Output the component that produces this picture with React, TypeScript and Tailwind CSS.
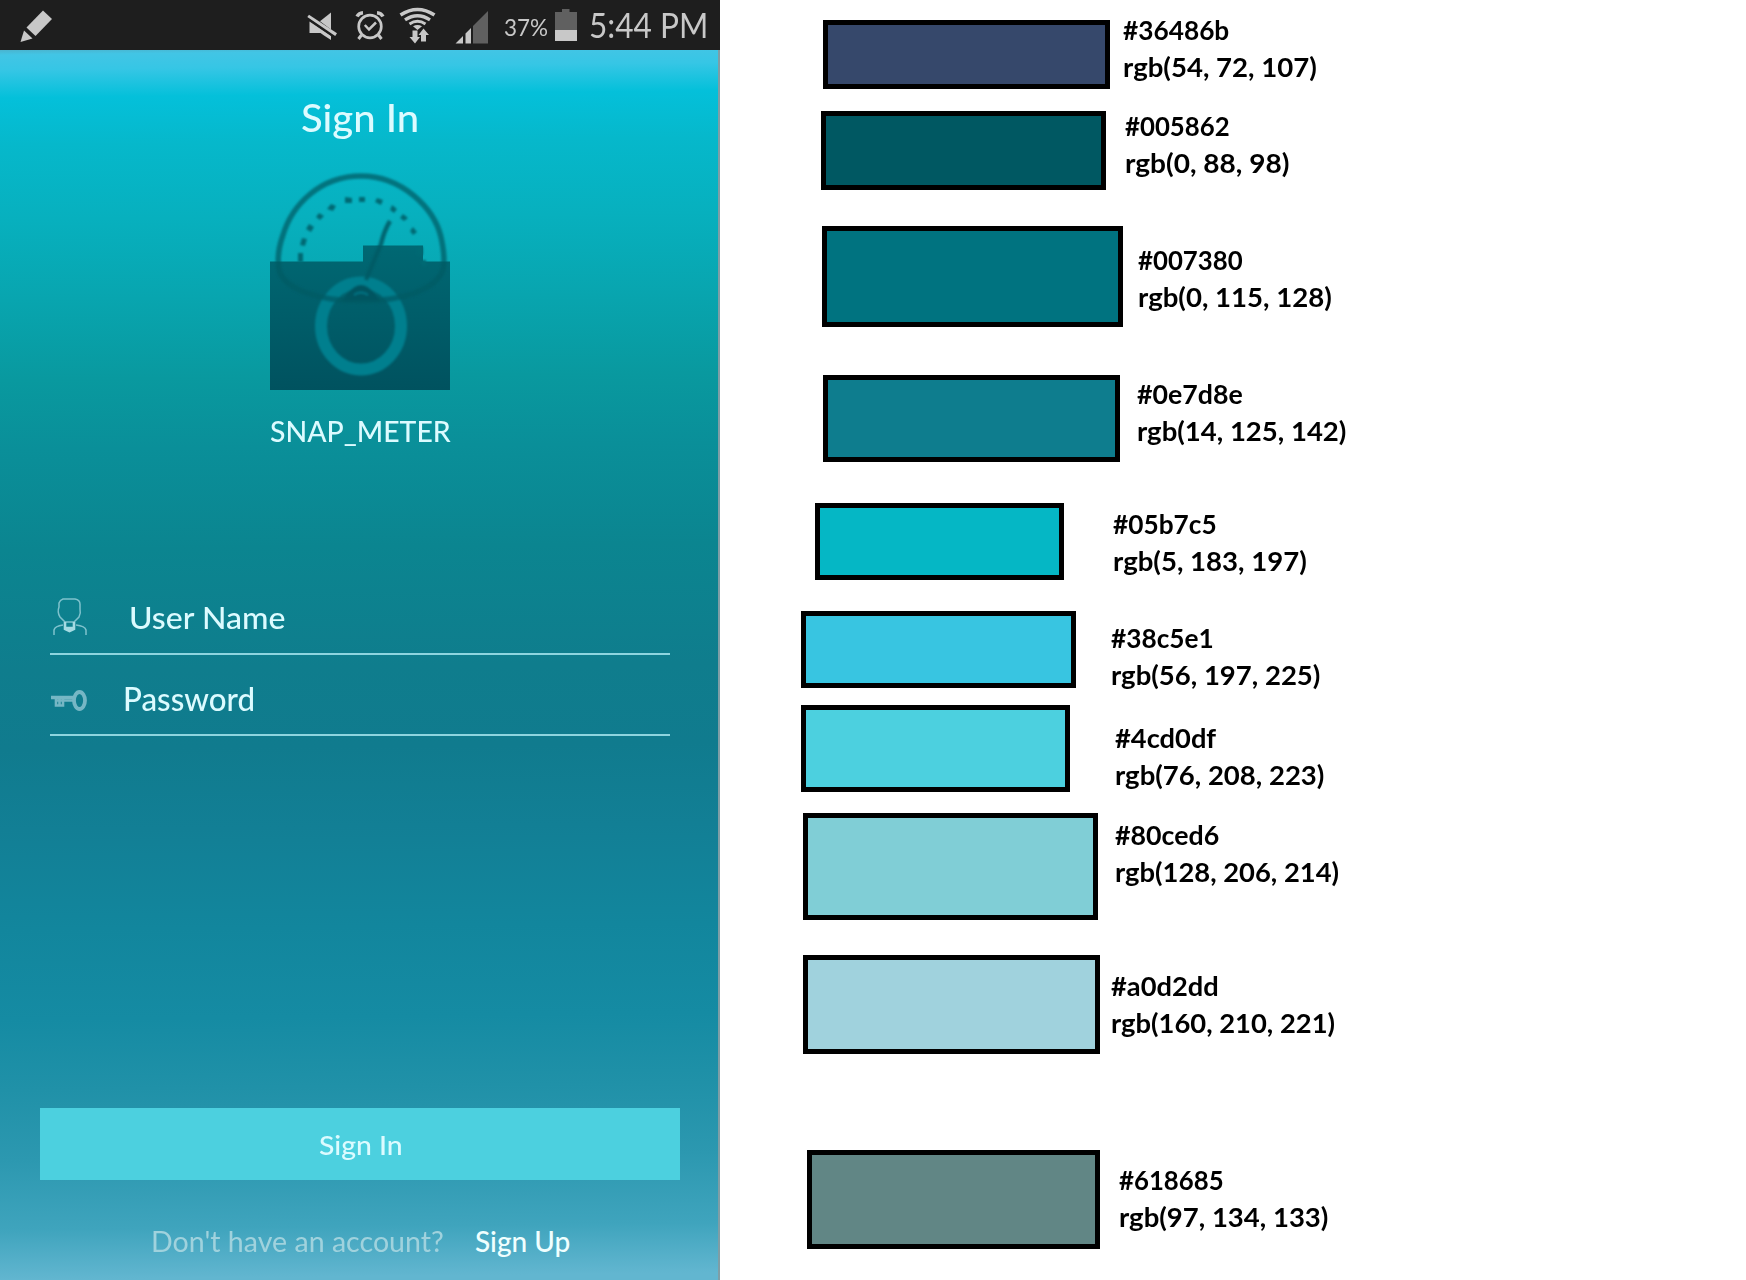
import { useLayoutEffect, useRef, useState } from "react";

/** Text that is stretched or squeezed horizontally to fill a given width. */
function FitText({ text, width, className = "" }: { text: string; width: number; className?: string }) {
  const ref = useRef<HTMLSpanElement>(null);
  const [scale, setScale] = useState(1);
  useLayoutEffect(() => {
    if (ref.current) setScale(width / ref.current.offsetWidth);
  }, [text, width]);
  return (
    <span className={`block ${className}`} style={{ width }}>
      <span ref={ref} className="inline-block origin-left whitespace-nowrap" style={{ transform: `scaleX(${scale})` }}>
        {text}
      </span>
    </span>
  );
}

const swatches = [
  { hex: "#36486b", rgb: "rgb(54, 72, 107)", hw: 106, rw: 194, row: "pl-[103px] mt-[20px]", box: "w-[287px] h-[69px] bg-[#36486b]", label: "ml-[13px] -mt-[9px]" },
  { hex: "#005862", rgb: "rgb(0, 88, 98)", hw: 105, rw: 164, row: "pl-[101px] mt-[22px]", box: "w-[285px] h-[79px] bg-[#005862]", label: "ml-[19px] -mt-[4px]" },
  { hex: "#007380", rgb: "rgb(0, 115, 128)", hw: 105, rw: 194, row: "pl-[102px] mt-[36px]", box: "w-[301px] h-[101px] bg-[#007380]", label: "ml-[15px] mt-[15px]" },
  { hex: "#0e7d8e", rgb: "rgb(14, 125, 142)", hw: 106, rw: 209, row: "pl-[103px] mt-[48px]", box: "w-[297px] h-[87px] bg-[#0e7d8e]", label: "ml-[17px] mt-0" },
  { hex: "#05b7c5", rgb: "rgb(5, 183, 197)", hw: 104, rw: 194, row: "pl-[95px] mt-[41px]", box: "w-[249px] h-[77px] bg-[#05b7c5]", label: "ml-[49px] mt-[2px]" },
  { hex: "#38c5e1", rgb: "rgb(56, 197, 225)", hw: 103, rw: 209, row: "pl-[81px] mt-[31px]", box: "w-[275px] h-[77px] bg-[#38c5e1]", label: "ml-[35px] mt-[8px]" },
  { hex: "#4cd0df", rgb: "rgb(76, 208, 223)", hw: 101, rw: 209, row: "pl-[81px] mt-[17px]", box: "w-[269px] h-[87px] bg-[#4cd0df]", label: "ml-[45px] mt-[14px]" },
  { hex: "#80ced6", rgb: "rgb(128, 206, 214)", hw: 104, rw: 224, row: "pl-[83px] mt-[21px]", box: "w-[295px] h-[107px] bg-[#80ced6]", label: "ml-[17px] mt-[3px]" },
  { hex: "#a0d2dd", rgb: "rgb(160, 210, 221)", hw: 108, rw: 224, row: "pl-[83px] mt-[35px]", box: "w-[297px] h-[99px] bg-[#a0d2dd]", label: "ml-[11px] mt-[12px]" },
  { hex: "#618685", rgb: "rgb(97, 134, 133)", hw: 105, rw: 209, row: "pl-[87px] mt-[96px]", box: "w-[293px] h-[99px] bg-[#618685]", label: "ml-[19px] mt-[11px]" },
];

function Palette() {
  return (
    <section className="flex h-[1280px] flex-1 flex-col bg-white font-['Lato',sans-serif] text-[27px] leading-[37px] font-bold text-black">
      {swatches.map((s) => (
        <div key={s.hex} className={`flex items-start ${s.row}`}>
          <div className={`shrink-0 border-5 border-black ${s.box}`} />
          <div className={`h-0 ${s.label}`}>
            <FitText text={s.hex} width={s.hw} />
            <FitText text={s.rgb} width={s.rw} />
          </div>
        </div>
      ))}
    </section>
  );
}

function StatusBar() {
  return (
    <header className="flex h-[50px] bg-[#1e1e1e] text-[#c8c8c8]">
      <svg width="60" height="50" viewBox="0 0 60 50" fill="#c8c8c8">
        <path d="M43 10.5 52 19 35.5 36 26.5 27.500Z" />
        <path d="M24 30.500 32.500 38.500 20.500 42Z" />
      </svg>
      <svg className="ml-[240px]" width="200" height="50" viewBox="300 0 200 50" fill="none" stroke="#c8c8c8">
        <g fill="#c8c8c8" stroke="none">
          <path d="M309.500 21.500 331 36V40L324 35.500 320.500 33H309.500Z" />
          <path d="M331 12.500V29.500L320 21.300Z" />
          <path d="M309 14.700 337 33.200 335.200 36 307.300 17Z" />
        </g>
        <path d="M308 19 334 37" stroke="#1e1e1e" strokeWidth="1.500" />
        <circle cx="370" cy="26.500" r="11.300" strokeWidth="2.700" />
        <path d="M364.800 25 369 29.500 376 22.500" strokeWidth="2.500" />
        <path d="M357 16.500Q359 13 363 12.700M383 16.500Q381 13 377 12.700" strokeWidth="3.500" />
        <path d="M361.500 35 358.500 39M378.500 35 381.500 39" strokeWidth="3" />
        <path d="M400.500 15Q417.500 4 434.500 15" strokeWidth="3.600" />
        <path d="M405 19.800Q417.500 11.500 430 19.800" strokeWidth="3.400" />
        <path d="M409.500 24Q417.500 18.500 425.500 24" strokeWidth="2.900" />
        <path d="M413 26.300Q417.500 23.500 422 26.300L417.500 30Z" fill="#c8c8c8" stroke="none" />
        <path d="M412.500 30.500H417.500V37H420L415 43.500 409.500 37H412.500ZM421 41.500V35H418.500L423.500 28.500 429 35H426V41.500Z" fill="#c8c8c8" stroke="none" />
        <path d="M455.500 43.500 463 36V43.500ZM465.500 33.500 471 28V43.500H465.500Z" fill="#c8c8c8" stroke="none" />
        <path d="M473 26 488 11V43.500H473Z" fill="#606060" stroke="none" />
      </svg>
      <FitText text="37%" width={44} className="ml-[4px] pt-[10px] text-[24px] leading-[34px]" />
      <svg className="ml-[4px]" width="36" height="50" viewBox="552 0 36 50">
        <path d="M562 9H569.500V12H577V41H555V12H562Z" fill="#606060" />
        <path d="M555 30H577V41H555Z" fill="#c8c8c8" />
      </svg>
      <FitText text="5:44 PM" width={119} className="ml-px pt-[4px] text-[34px] leading-[42px]" />
    </header>
  );
}

function Logo() {
  return (
    <svg className="ml-[250px] mt-[25px] block" width="220" height="230" viewBox="250 166 220 230">
      <defs>
        <linearGradient id="body" x1="0" y1="0" x2="0" y2="1">
          <stop offset="0" stopColor="#006873" />
          <stop offset="1" stopColor="#00525f" />
        </linearGradient>
        <filter id="soft" x="-10%" y="-10%" width="120%" height="120%">
          <feGaussianBlur stdDeviation="0.900" />
        </filter>
      </defs>
      <path d="M270 261.500H363V245.500H423V261.500H450V390H270Z" fill="url(#body)" />
      <g filter="url(#soft)" fill="none">
        <ellipse cx="361" cy="326" rx="40" ry="43.500" stroke="#027f8e" strokeWidth="12" />
        <path d="M361 176C402 176 434 208 441 237C444 251 445 262 443 270C436 289 404 301 361 301C318 301 284 289 279 270C277 258 279 246 283 235C292 205 320 176 361 176Z" stroke="#005a64" strokeOpacity="0.720" strokeWidth="5.500" />
        <path d="M390 221Q384 231 381 244L366 280" stroke="#005a64" strokeOpacity="0.850" strokeWidth="4.500" />
        <path d="M342 301Q352 285 361 285Q370 285 380 301Z" fill="#005560" />
        <path d="M354 295Q361 290 368 295" stroke="#027585" strokeWidth="2" />
      </g>
      <g filter="url(#soft)" fill="#006973">
        <path d="M298 253h5v9h-5zM302 238l5 1-2 7-5-1zM309 224l5 3-3 5-5-3zM319 213l5 3-4 4-4-3zM331 204l5 2-3 5-6-2zM345 197l7 1v5h-7zM359 197h6v5h-6zM377 198l6 2-2 5-6-3zM392 205l5 4-3 4-4-3zM403 214l5 4-4 3-4-3zM413 227l4 5-4 3-3-4zM417 247h6v8h-6zM421 260h5v6h-4z" />
      </g>
    </svg>
  );
}

function UserIcon() {
  return (
    <svg width="38" height="42" viewBox="50 596 38 42" fill="none" stroke="#7fc2cd" strokeWidth="1.500">
      <path d="M63 599H75Q80 600 80 604V609Q81 613 79 617L74 622H65L60 617Q57 612 59 607V603Q60 600 63 599Z" />
      <path d="M54 635V630Q55 626 63 625M86 635V630Q85 626 76 625" />
      <path d="M65 622V629L69.500 631 74 629V622M65 628H74" stroke="#a5dbe3" strokeWidth="2.600" />
    </svg>
  );
}

function KeyIcon() {
  return (
    <svg className="mt-[33px]" width="38" height="24" viewBox="50 688 38 24" fill="none" stroke="#76b7c5">
      <ellipse cx="79.500" cy="700.500" rx="5.500" ry="8.500" strokeWidth="3.800" />
      <path d="M51 697.500H73" strokeWidth="3.500" />
      <path d="M73 700.500H55M56 699V705.500H63V699M59.500 699V706" strokeWidth="2.600" />
    </svg>
  );
}

function Phone() {
  return (
    <section className="flex h-[1280px] w-[720px] shrink-0 flex-col font-['Lato',sans-serif] text-[#dcfbff]">
      <StatusBar />
      <main className="h-[1230px] border-r-2 border-[#7f9ea6] bg-[linear-gradient(179.4deg,#4ab4cf_0px,#42c5e5_5px,#36c6e5_20px,#04c0da_48px,#06b8cb_95px,#07b0be_170px,#08a5af_250px,#09999f_330px,#0a8f99_400px,#0b8590_500px,#0f7d8d_620px,#107b8e_700px,#127f95_780px,#12869d_880px,#158ba3_970px,#2091a8_1040px,#2c98b0_1110px,#3fa4bd_1180px,#62b6d0_1230px)]">
        <FitText text="Sign In" width={118} className="ml-[301px] pt-[43px] text-[39px] leading-[48px] font-medium" />
        <Logo />
        <FitText text="SNAP_METER" width={181} className="ml-[270px] mt-[17px] text-[29px] leading-[36px] font-medium" />
        <div className="ml-[50px] mt-[147px] flex h-[59px] w-[620px] items-start border-b-2 border-[#8ed5df]">
          <UserIcon />
          <FitText text="User Name" width={156} className="ml-[41px] mt-px text-[31px] leading-[40px] font-medium" />
        </div>
        <div className="ml-[50px] flex h-[81px] w-[620px] items-start border-b-2 border-[#8ed5df]">
          <KeyIcon />
          <FitText text="Password" width={132} className="ml-[35px] mt-[24px] text-[32px] leading-[40px] font-medium" />
        </div>
        <button className="ml-[40px] mt-[372px] flex h-[72px] w-[640px] bg-[#4cd0df]">
          <FitText text="Sign In" width={84} className="ml-[279px] mt-[19px] text-left text-[27px] leading-[36px] font-medium" />
        </button>
        <div className="mt-[43px] flex text-[28px] leading-[36px]">
          <FitText text="Don't have an account?" width={293} className="ml-[151px] text-[#a0d2dd]" />
          <FitText text="Sign Up" width={95} className="ml-[31px] font-medium text-[#f0ffff]" />
        </div>
      </main>
    </section>
  );
}

export default function App() {
  return (
    <div className="flex h-[1280px] w-[1746px] overflow-hidden bg-white">
      <Phone />
      <Palette />
    </div>
  );
}
